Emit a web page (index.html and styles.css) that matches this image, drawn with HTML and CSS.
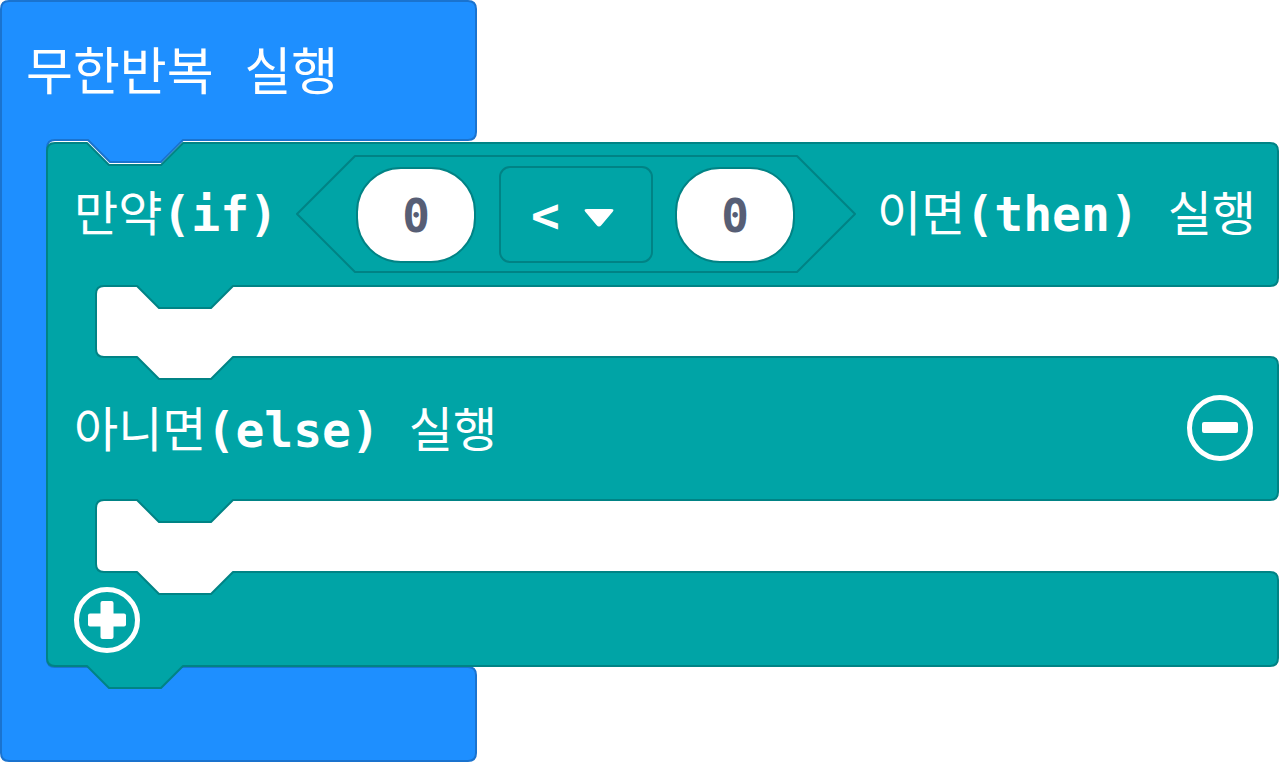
FILE: index.html
```html
<!DOCTYPE html>
<html lang="ko">
<head>
<meta charset="utf-8">
<title>무한반복 실행</title>
<link rel="stylesheet" href="styles.css">
</head>
<body>
<main class="workspace">
  <svg class="canvas" width="1280" height="763" viewBox="0 0 1280 763" xmlns="http://www.w3.org/2000/svg">
    <!-- forever block -->
    <path class="blk-forever" d="M9,1 H468 Q476,1 476,9 V132 Q476,140 468,140 H183 L161,162 H110 L88,140 H55 Q47,140 47,148 V659 Q47,667 55,667 H468 Q476,667 476,675 V753 Q476,761 468,761 H9 Q1,761 1,753 V9 Q1,1 9,1 Z"/>
    <text class="lbl lbl-big" x="26" y="90"><tspan class="ko">무한반복</tspan><tspan class="en"> </tspan><tspan class="ko">실행</tspan></text>

    <!-- if / else block -->
    <path class="blk-logic" d="M47,151 Q47,143 55,143 H87 L109,165 H161 L183,143 H1270 Q1278,143 1278,151 V278 Q1278,286 1270,286 H233 L211,308 H159 L137,286 H104 Q96,286 96,294 V349 Q96,357 104,357 H137 L159,379 H211 L233,357 H1270 Q1278,357 1278,365 V492 Q1278,500 1270,500 H233 L211,522 H159 L137,500 H104 Q96,500 96,508 V564 Q96,572 104,572 H137 L159,594 H211 L233,572 H1270 Q1278,572 1278,580 V658 Q1278,666 1270,666 H183 L161,688 H109 L87,666 H55 Q47,666 47,658 Z"/>

    <text class="lbl" x="74" y="231"><tspan class="ko">만약</tspan><tspan class="en">(if)</tspan></text>

    <!-- comparison -->
    <path class="blk-compare" d="M297,214 L355,156 H797 L855,214 L797,272 H355 Z"/>
    <rect class="num-field" x="357" y="168" width="118" height="94" rx="44" ry="44"/>
    <text class="num" x="416" y="232">0</text>
    <rect class="dd-field" x="500" y="167" width="152" height="95" rx="10" ry="10"/>
    <text class="op" x="531" y="232">&lt;</text>
    <path class="dd-arrow" d="M587,209 H611 Q615,209 612.5,212 L601.5,225 Q599,228 596.5,225 L585.5,212 Q583,209 587,209 Z"/>
    <rect class="num-field" x="676" y="168" width="118" height="94" rx="44" ry="44"/>
    <text class="num" x="735" y="232">0</text>

    <text class="lbl" x="877" y="231"><tspan class="ko">이면</tspan><tspan class="en">(then) </tspan><tspan class="ko">실행</tspan></text>

    <text class="lbl" x="74" y="447"><tspan class="ko">아니면</tspan><tspan class="en">(else) </tspan><tspan class="ko">실행</tspan></text>

    <!-- minus button -->
    <g class="btn">
      <circle class="btn-ring" cx="1220" cy="428" r="30.5"/>
      <rect class="btn-fill" x="1202" y="422" width="36" height="11" rx="2"/>
    </g>

    <!-- plus button -->
    <g class="btn">
      <circle class="btn-ring" cx="107" cy="620" r="30.5"/>
      <rect class="btn-fill" x="88" y="613.5" width="38" height="13" rx="2"/>
      <rect class="btn-fill" x="100.5" y="601" width="13" height="38" rx="2"/>
    </g>
  </svg>
</main>
</body>
</html>
```

FILE: styles.css
```css
html, body {
  margin: 0;
  padding: 0;
  background: #ffffff;
  overflow: hidden;
}

.workspace {
  width: 1280px;
  height: 763px;
  position: relative;
}

.canvas {
  display: block;
}

.blk-forever {
  fill: #1e8fff;
  stroke: #1a73cf;
  stroke-width: 2;
  stroke-linejoin: round;
}

.blk-logic {
  fill: #00a4a6;
  stroke: #008385;
  stroke-width: 2;
  stroke-linejoin: round;
}

.blk-compare {
  fill: #00a4a6;
  stroke: #008385;
  stroke-width: 2;
  stroke-linejoin: round;
}

.num-field {
  fill: #ffffff;
  stroke: #008385;
  stroke-width: 2;
}

.dd-field {
  fill: #00a4a6;
  stroke: #008385;
  stroke-width: 2;
}

.dd-arrow {
  fill: #ffffff;
}

.lbl {
  font-family: "DejaVu Sans Mono", "Noto Sans CJK KR", monospace;
  font-size: 48px;
  fill: #ffffff;
}

.lbl-big {
  font-size: 51px;
}

.lbl .ko {
  font-family: "Noto Sans CJK KR", sans-serif;
  font-weight: 400;
}

.lbl .en {
  font-family: "DejaVu Sans Mono", monospace;
  font-weight: 700;
}

.num {
  font-family: "DejaVu Sans Mono", monospace;
  font-weight: 700;
  font-size: 46px;
  fill: #575e75;
  text-anchor: middle;
}

.op {
  font-family: "DejaVu Sans Mono", monospace;
  font-weight: 700;
  font-size: 48px;
  fill: #ffffff;
}

.btn-ring {
  fill: none;
  stroke: #ffffff;
  stroke-width: 5;
}

.btn-fill {
  fill: #ffffff;
}
```
